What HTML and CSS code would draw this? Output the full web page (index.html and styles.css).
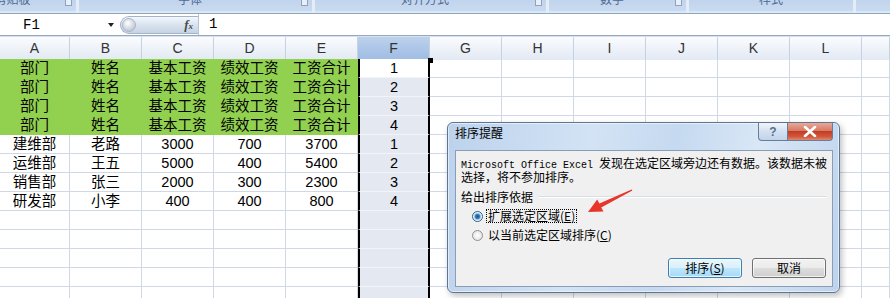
FILE: index.html
```html
<!DOCTYPE html>
<html lang="zh-CN">
  <head>
    <meta charset="UTF-8" />
    <title>排序提醒</title>
    <link rel="stylesheet" href="styles.css">
  </head>
  <body>
    <div class="ribbon">
      <div class="group g1"><span>剪贴板</span><i class="launcher"></i></div>
      <div class="group g2"><span>字体</span><i class="launcher"></i></div>
      <div class="group g3"><span>对齐方式</span><i class="launcher"></i></div>
      <div class="group g4"><span>数字</span><i class="launcher"></i></div>
      <div class="group g5"><span>样式</span></div>
      <div class="group g6"></div>
    </div>

    <div class="fbar">
      <div class="namebox">F1<i class="drop"></i></div>
      <div class="fx-pill"><i class="knob"></i><span class="fx">f<small>x</small></span></div>
      <div class="formula">1</div>
    </div>
    <div class="strip"></div>

    <div class="headers">
      <div class="h">A</div><div class="h">B</div><div class="h">C</div><div class="h">D</div>
      <div class="h">E</div><div class="h sel">F</div><div class="h">G</div><div class="h">H</div>
      <div class="h">I</div><div class="h">J</div><div class="h">K</div><div class="h">L</div><div class="h"></div>
    </div>

    <div class="sheet">
      <div class="row">
        <div class="c g">部门</div><div class="c g">姓名</div><div class="c g">基本工资</div><div class="c g">绩效工资</div><div class="c g">工资合计</div>
        <div class="c f act">1</div>
        <div class="c"></div><div class="c"></div><div class="c"></div><div class="c"></div><div class="c"></div><div class="c"></div><div class="c"></div>
      </div>
      <div class="row">
        <div class="c g">部门</div><div class="c g">姓名</div><div class="c g">基本工资</div><div class="c g">绩效工资</div><div class="c g">工资合计</div>
        <div class="c f">2</div>
        <div class="c"></div><div class="c"></div><div class="c"></div><div class="c"></div><div class="c"></div><div class="c"></div><div class="c"></div>
      </div>
      <div class="row">
        <div class="c g">部门</div><div class="c g">姓名</div><div class="c g">基本工资</div><div class="c g">绩效工资</div><div class="c g">工资合计</div>
        <div class="c f">3</div>
        <div class="c"></div><div class="c"></div><div class="c"></div><div class="c"></div><div class="c"></div><div class="c"></div><div class="c"></div>
      </div>
      <div class="row">
        <div class="c g">部门</div><div class="c g">姓名</div><div class="c g">基本工资</div><div class="c g">绩效工资</div><div class="c g">工资合计</div>
        <div class="c f">4</div>
        <div class="c"></div><div class="c"></div><div class="c"></div><div class="c"></div><div class="c"></div><div class="c"></div><div class="c"></div>
      </div>
      <div class="row">
        <div class="c">建维部</div><div class="c">老路</div><div class="c">3000</div><div class="c">700</div><div class="c">3700</div>
        <div class="c f">1</div>
        <div class="c"></div><div class="c"></div><div class="c"></div><div class="c"></div><div class="c"></div><div class="c"></div><div class="c"></div>
      </div>
      <div class="row">
        <div class="c">运维部</div><div class="c">王五</div><div class="c">5000</div><div class="c">400</div><div class="c">5400</div>
        <div class="c f">2</div>
        <div class="c"></div><div class="c"></div><div class="c"></div><div class="c"></div><div class="c"></div><div class="c"></div><div class="c"></div>
      </div>
      <div class="row">
        <div class="c">销售部</div><div class="c">张三</div><div class="c">2000</div><div class="c">300</div><div class="c">2300</div>
        <div class="c f">3</div>
        <div class="c"></div><div class="c"></div><div class="c"></div><div class="c"></div><div class="c"></div><div class="c"></div><div class="c"></div>
      </div>
      <div class="row">
        <div class="c">研发部</div><div class="c">小李</div><div class="c">400</div><div class="c">400</div><div class="c">800</div>
        <div class="c f">4</div>
        <div class="c"></div><div class="c"></div><div class="c"></div><div class="c"></div><div class="c"></div><div class="c"></div><div class="c"></div>
      </div>
      <div class="row">
        <div class="c"></div><div class="c"></div><div class="c"></div><div class="c"></div><div class="c"></div>
        <div class="c f"></div>
        <div class="c"></div><div class="c"></div><div class="c"></div><div class="c"></div><div class="c"></div><div class="c"></div><div class="c"></div>
      </div>
      <div class="row">
        <div class="c"></div><div class="c"></div><div class="c"></div><div class="c"></div><div class="c"></div>
        <div class="c f"></div>
        <div class="c"></div><div class="c"></div><div class="c"></div><div class="c"></div><div class="c"></div><div class="c"></div><div class="c"></div>
      </div>
      <div class="row">
        <div class="c"></div><div class="c"></div><div class="c"></div><div class="c"></div><div class="c"></div>
        <div class="c f"></div>
        <div class="c"></div><div class="c"></div><div class="c"></div><div class="c"></div><div class="c"></div><div class="c"></div><div class="c"></div>
      </div>
      <div class="row">
        <div class="c"></div><div class="c"></div><div class="c"></div><div class="c"></div><div class="c"></div>
        <div class="c f"></div>
        <div class="c"></div><div class="c"></div><div class="c"></div><div class="c"></div><div class="c"></div><div class="c"></div><div class="c"></div>
      </div>
      <div class="row">
        <div class="c"></div><div class="c"></div><div class="c"></div><div class="c"></div><div class="c"></div>
        <div class="c f"></div>
        <div class="c"></div><div class="c"></div><div class="c"></div><div class="c"></div><div class="c"></div><div class="c"></div><div class="c"></div>
      </div>
    </div>

    <div class="dialog">
      <div class="dlg-title">
        <span class="caption">排序提醒</span>
        <div class="tbtns">
          <span class="tbtn help">?</span>
          <span class="tbtn close">
            <svg width="14" height="11" viewBox="0 0 14 11">
              <path d="M2 1 L12 10 M12 1 L2 10" stroke="#fff" stroke-width="2.6" stroke-linecap="round" />
            </svg>
          </span>
        </div>
      </div>
      <div class="dlg-body">
        <p class="msg"><span class="mono">Microsoft Office Excel </span>发现在选定区域旁边还有数据。该数据未被</p>
        <p class="msg">选择，将不参加排序。</p>
        <div class="grp"><span>给出排序依据</span><i class="rule"></i></div>
        <div class="opt"><i class="radio on"></i><span class="focus">扩展选定区域(<u>E</u>)</span></div>
        <div class="opt"><i class="radio"></i><span class="nofocus">以当前选定区域排序(<u>C</u>)</span></div>
        <div class="actions">
          <button class="btn default">排序(<u>S</u>)</button>
          <button class="btn">取消</button>
        </div>
      </div>
    </div>

    <svg class="arrow" width="60" height="35" viewBox="0 0 60 35">
      <polygon points="8,27 23.5,26.5 21.2,22.4 52.4,5.6 51.6,4.4 19.4,18.6 17.2,14.6" fill="#e8352b" />
    </svg>
  </body>
</html>
```

FILE: styles.css
```css
body {
  margin: 0;
  width: 890px;
  height: 298px;
  overflow: hidden;
  position: relative;
  background: #fff;
  font-family: "Liberation Sans", "Noto Sans CJK SC", sans-serif;
  color: #000;
}

/* ribbon (group captions only, cut off at the top) */
.ribbon {
  height: 13px;
  display: flex;
  gap: 3px;
  overflow: hidden;
  background: #e3ecf7;
  border-bottom: 1px solid #8ea7c7;
}
.group {
  display: flex;
  align-items: flex-start;
  background: linear-gradient(#c0d4ed, #c9dbf0);
  border-bottom: 2px solid #dce7f4;
  font-size: 12px;
  line-height: 12px;
  color: #4f6b92;
}
.group span {
  flex: 1;
  text-align: center;
  margin-top: -6px;
}
.launcher {
  width: 5px;
  height: 5px;
  margin: 0 4px 0 0;
  border: 1px solid #8ea3bf;
  border-top: none;
  background: #e8eff8;
}
.g1 { width: 116px; margin-left: -40px; }
.g2 { width: 233px; }
.g3 { width: 231px; }
.g4 { width: 137px; }
.g5 { width: 164px; }
.g6 { flex: 1; }

/* formula bar */
.fbar {
  display: flex;
  height: 21px;
  border-bottom: 1px solid #98a8bc;
  background: #fff;
}
.namebox {
  width: 97px;
  padding-left: 23px;
  display: flex;
  align-items: center;
  font: 14px "Liberation Mono", monospace;
}
.drop {
  margin-left: auto;
  margin-right: 6px;
  border-left: 3px solid transparent;
  border-right: 3px solid transparent;
  border-top: 4px solid #222;
}
.fx-pill {
  width: 71px;
  height: 16px;
  margin-top: 2px;
  padding: 0 5px 0 1px;
  display: flex;
  align-items: center;
  justify-content: space-between;
  border: 1px solid #a3b3c8;
  border-right: none;
  border-radius: 10px 0 0 10px;
  background: linear-gradient(#f5f8fc, #d9e3ef 50%, #c6d3e4);
}
.knob {
  width: 12px;
  height: 12px;
  border-radius: 50%;
  border: 1px solid #aab6c4;
  background: radial-gradient(circle at 40% 35%, #fff, #c3ccd8 70%, #9eabbb);
}
.fx {
  font: italic bold 13px "Liberation Serif", serif;
  color: #4a4a4a;
}
.fx small {
  font-size: 9px;
}
.formula {
  flex: 1;
  border-left: 1px solid #b6c4d6;
  padding-left: 10px;
  font: 14px "Liberation Mono", monospace;
  line-height: 21px;
}
.strip {
  height: 1px;
  background: #d6e2f0;
}

/* sheet */
.headers,
.row {
  display: grid;
  grid-template-columns: 70px repeat(11, 72px) 1fr;
}
.headers {
  height: 21px;
  border-bottom: 1px solid #9eb6ce;
}
.h {
  border-right: 1px solid #c6d2e1;
  background: linear-gradient(#fafcfe, #e2e9f3);
  text-align: center;
  font-size: 14px;
  line-height: 23px;
  color: #333;
}
.h.sel {
  background: linear-gradient(#bcd1ec, #9ebce4);
}
.row {
  height: 19px;
}
.c {
  box-sizing: border-box;
  border-right: 1px solid #d0d7e5;
  border-bottom: 1px solid #d0d7e5;
  text-align: center;
  font-size: 14.5px;
  line-height: 18px;
  white-space: nowrap;
  overflow: hidden;
}
.c.g {
  background: #92d050;
  border-color: #92d050;
}
.c.f {
  background: #e4e8f1;
  border-left: 2px solid #000;
  border-right: 2px solid #000;
  border-bottom-color: #f3f4f8;
}
.c.act {
  background: #fff;
  position: relative;
  overflow: visible;
}
.c.act::after {
  content: "";
  position: absolute;
  right: -5px;
  top: -1px;
  width: 5px;
  height: 5px;
  background: #000;
}

/* dialog */
.dialog {
  position: absolute;
  left: 447px;
  top: 122px;
  width: 393px;
  height: 171px;
  box-sizing: border-box;
  display: flex;
  flex-direction: column;
  border: 1px solid #5b7594;
  border-radius: 6px;
  background: linear-gradient(100deg, #bcd2ec 0%, #d3e3f5 35%, #c5d9f0 55%, #d9e7f6 75%, #bdd3ed 100%);
  box-shadow: inset 0 0 0 1px rgba(255, 255, 255, 0.55), 2px 3px 6px rgba(0, 0, 0, 0.25);
}
.dlg-title {
  height: 27px;
  display: flex;
  align-items: flex-start;
  padding-left: 7px;
}
.caption {
  flex: 1;
  font-size: 12px;
  line-height: 22px;
}
.tbtns {
  display: flex;
  margin-right: 6px;
}
.tbtn {
  height: 18px;
  display: flex;
  align-items: center;
  justify-content: center;
  border: 1px solid #677d98;
  border-top: none;
  box-sizing: border-box;
}
.help {
  width: 29px;
  border-right: none;
  border-radius: 0 0 0 4px;
  background: linear-gradient(#f1f5fb, #d3e0f0 50%, #c2d3ea);
  font: bold 12px "Liberation Sans", sans-serif;
  color: #5a6f8a;
}
.close {
  width: 46px;
  border-radius: 0 0 4px 0;
  background: linear-gradient(#eaa899, #d77a66 45%, #c23d25 50%, #d2573c 80%, #e08a70);
}
.dlg-body {
  flex: 1;
  margin: 0 6px 5px 7px;
  padding: 5px 6px 0 5px;
  background: #f0f0f0;
  border: 1px solid #8a9db6;
  font-size: 12px;
  line-height: 14px;
  font-family: "Noto Sans CJK SC", sans-serif;
}
.msg {
  margin: 0;
  height: 14px;
  white-space: nowrap;
}
.mono {
  font-family: "Liberation Mono", monospace;
  font-size: 10px;
  line-height: 14px;
}
.grp {
  display: flex;
  align-items: center;
  margin-top: 6px;
}
.rule {
  flex: 1;
  margin-left: 5px;
  border-top: 1px solid #d5dfe5;
  border-bottom: 1px solid #fff;
}
.opt {
  display: flex;
  align-items: center;
  height: 14px;
  margin-top: 5px;
  padding-left: 11px;
}
.radio {
  width: 11px;
  height: 11px;
  margin-right: 3px;
  box-sizing: border-box;
  border-radius: 50%;
  border: 1px solid #8e8f8f;
  background: radial-gradient(circle at 50% 50%, #fff, #dcdcdc);
}
.radio.on {
  border-color: #2c628b;
  background: radial-gradient(circle, #1d5282 0, #3a80be 2.2px, #a9cfee 3.2px, #eef4fa 4px);
}
.focus {
  border: 1px dotted #000;
  padding: 0 1px;
  line-height: 12px;
}
.nofocus {
  padding: 0 2px;
}
.actions {
  display: flex;
  justify-content: flex-end;
  gap: 10px;
  margin-top: 16px;
}
.btn {
  width: 74px;
  height: 20px;
  padding: 0;
  border: 1px solid #707070;
  border-radius: 3px;
  background: linear-gradient(#f2f2f2, #ebebeb 50%, #dddddd 50%, #cfcfcf);
  box-shadow: inset 0 0 0 1px rgba(255, 255, 255, 0.7);
  font-family: "Noto Sans CJK SC", sans-serif;
  font-size: 12px;
  line-height: 18px;
  color: #000;
}
.btn.default {
  border-color: #3c7fb1;
  background: linear-gradient(#eaf6fd, #d9f0fc 50%, #bee6fd 50%, #a7d9f5);
}

.arrow {
  position: absolute;
  left: 580px;
  top: 185px;
}
```
